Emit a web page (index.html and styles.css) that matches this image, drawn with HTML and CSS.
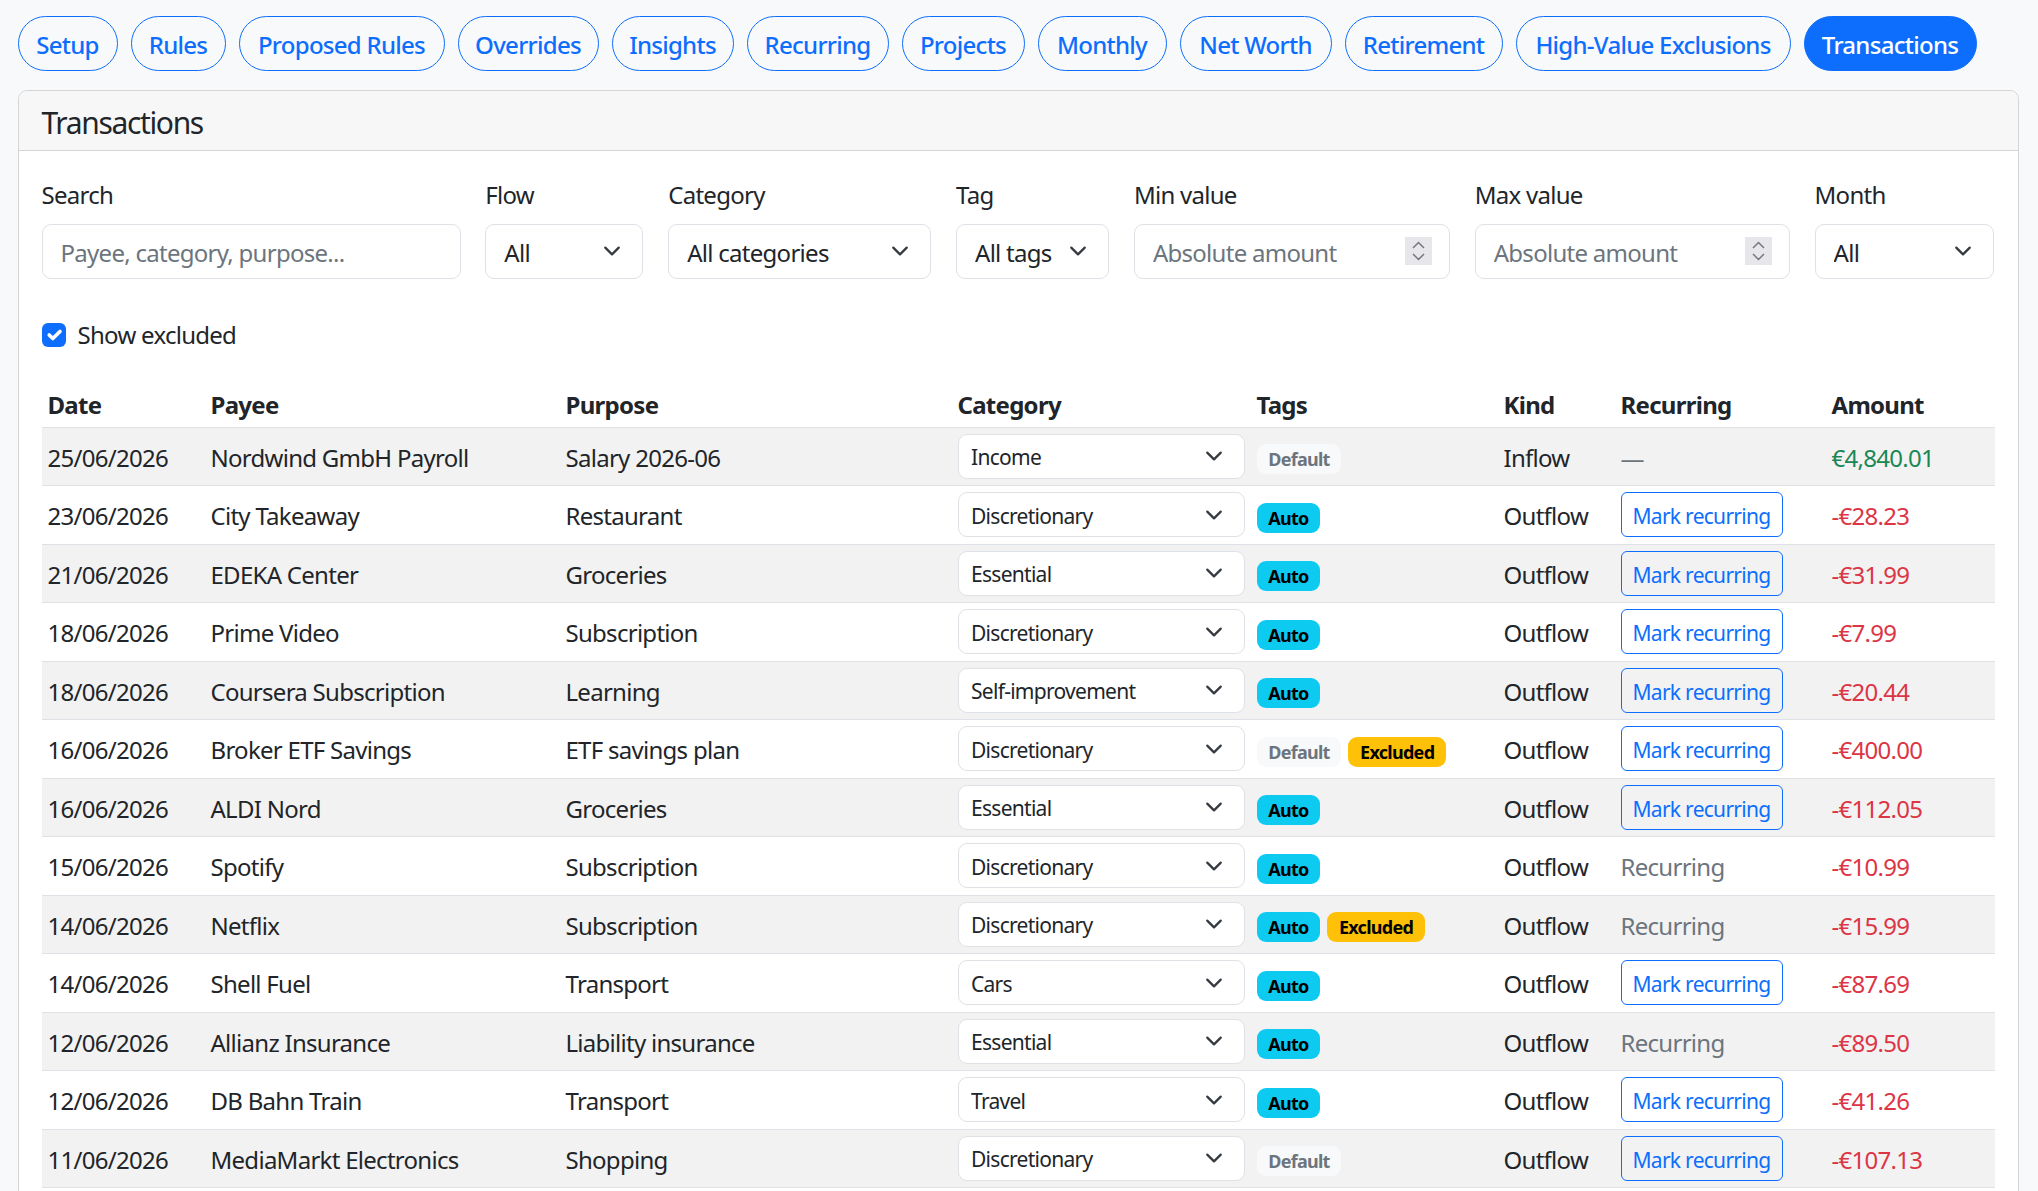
FILE: index.html
```html
<!DOCTYPE html>
<html lang="en">
<head>
    <meta charset="UTF-8">
    <title>Transactions</title>
    <link rel="stylesheet" href="styles.css">
</head>
<body>
    <nav class="tabs">
        <a class="tab">Setup</a>
        <a class="tab">Rules</a>
        <a class="tab">Proposed Rules</a>
        <a class="tab">Overrides</a>
        <a class="tab">Insights</a>
        <a class="tab">Recurring</a>
        <a class="tab">Projects</a>
        <a class="tab">Monthly</a>
        <a class="tab">Net Worth</a>
        <a class="tab">Retirement</a>
        <a class="tab">High-Value Exclusions</a>
        <a class="tab active">Transactions</a>
    </nav>

    <section class="card">
        <div class="card-header">Transactions</div>
        <div class="card-body">
            <!-- Filters -->
            <div class="filters">
                <div class="field">
                    <label>Search</label>
                    <input class="control" type="text" placeholder="Payee, category, purpose...">
                </div>
                <div class="field">
                    <label>Flow</label>
                    <select class="control"><option>All</option></select>
                </div>
                <div class="field">
                    <label>Category</label>
                    <select class="control"><option>All categories</option></select>
                </div>
                <div class="field">
                    <label>Tag</label>
                    <select class="control"><option>All tags</option></select>
                </div>
                <div class="field">
                    <label>Min value</label>
                    <div class="control number">
                        <input type="text" placeholder="Absolute amount">
                        <span class="spin"><svg viewBox="0 0 27 28" width="27" height="28"><path d="M8 11 13.5 5.5 19 11M8 17l5.5 5.5L19 17"/></svg></span>
                    </div>
                </div>
                <div class="field">
                    <label>Max value</label>
                    <div class="control number">
                        <input type="text" placeholder="Absolute amount">
                        <span class="spin"><svg viewBox="0 0 27 28" width="27" height="28"><path d="M8 11 13.5 5.5 19 11M8 17l5.5 5.5L19 17"/></svg></span>
                    </div>
                </div>
                <div class="field">
                    <label>Month</label>
                    <select class="control"><option>All</option></select>
                </div>
            </div>

            <label class="check">
                <span class="box"><svg viewBox="0 0 20 20" width="24" height="24"><path d="m6 10 3 3 6-6"/></svg></span>
                Show excluded
            </label>

            <!-- Transactions table -->
            <table>
                <thead>
                    <tr>
                        <th class="col-date">Date</th>
                        <th class="col-payee">Payee</th>
                        <th class="col-purpose">Purpose</th>
                        <th class="col-category">Category</th>
                        <th class="col-tags">Tags</th>
                        <th class="col-kind">Kind</th>
                        <th class="col-recurring">Recurring</th>
                        <th>Amount</th>
                    </tr>
                </thead>
                <tbody>
                    <tr>
                        <td>25/06/2026</td><td>Nordwind GmbH Payroll</td><td>Salary 2026-06</td>
                        <td><select class="control small"><option>Income</option></select></td>
                        <td><div class="tags"><span class="badge default">Default</span></div></td>
                        <td>Inflow</td><td class="muted">—</td><td class="inflow">€4,840.01</td>
                    </tr>
                    <tr>
                        <td>23/06/2026</td><td>City Takeaway</td><td>Restaurant</td>
                        <td><select class="control small"><option>Discretionary</option></select></td>
                        <td><div class="tags"><span class="badge auto">Auto</span></div></td>
                        <td>Outflow</td><td><button class="mark">Mark recurring</button></td><td class="outflow">-€28.23</td>
                    </tr>
                    <tr>
                        <td>21/06/2026</td><td>EDEKA Center</td><td>Groceries</td>
                        <td><select class="control small"><option>Essential</option></select></td>
                        <td><div class="tags"><span class="badge auto">Auto</span></div></td>
                        <td>Outflow</td><td><button class="mark">Mark recurring</button></td><td class="outflow">-€31.99</td>
                    </tr>
                    <tr>
                        <td>18/06/2026</td><td>Prime Video</td><td>Subscription</td>
                        <td><select class="control small"><option>Discretionary</option></select></td>
                        <td><div class="tags"><span class="badge auto">Auto</span></div></td>
                        <td>Outflow</td><td><button class="mark">Mark recurring</button></td><td class="outflow">-€7.99</td>
                    </tr>
                    <tr>
                        <td>18/06/2026</td><td>Coursera Subscription</td><td>Learning</td>
                        <td><select class="control small"><option>Self-improvement</option></select></td>
                        <td><div class="tags"><span class="badge auto">Auto</span></div></td>
                        <td>Outflow</td><td><button class="mark">Mark recurring</button></td><td class="outflow">-€20.44</td>
                    </tr>
                    <tr>
                        <td>16/06/2026</td><td>Broker ETF Savings</td><td>ETF savings plan</td>
                        <td><select class="control small"><option>Discretionary</option></select></td>
                        <td><div class="tags"><span class="badge default">Default</span><span class="badge excluded">Excluded</span></div></td>
                        <td>Outflow</td><td><button class="mark">Mark recurring</button></td><td class="outflow">-€400.00</td>
                    </tr>
                    <tr>
                        <td>16/06/2026</td><td>ALDI Nord</td><td>Groceries</td>
                        <td><select class="control small"><option>Essential</option></select></td>
                        <td><div class="tags"><span class="badge auto">Auto</span></div></td>
                        <td>Outflow</td><td><button class="mark">Mark recurring</button></td><td class="outflow">-€112.05</td>
                    </tr>
                    <tr>
                        <td>15/06/2026</td><td>Spotify</td><td>Subscription</td>
                        <td><select class="control small"><option>Discretionary</option></select></td>
                        <td><div class="tags"><span class="badge auto">Auto</span></div></td>
                        <td>Outflow</td><td class="muted">Recurring</td><td class="outflow">-€10.99</td>
                    </tr>
                    <tr>
                        <td>14/06/2026</td><td>Netflix</td><td>Subscription</td>
                        <td><select class="control small"><option>Discretionary</option></select></td>
                        <td><div class="tags"><span class="badge auto">Auto</span><span class="badge excluded">Excluded</span></div></td>
                        <td>Outflow</td><td class="muted">Recurring</td><td class="outflow">-€15.99</td>
                    </tr>
                    <tr>
                        <td>14/06/2026</td><td>Shell Fuel</td><td>Transport</td>
                        <td><select class="control small"><option>Cars</option></select></td>
                        <td><div class="tags"><span class="badge auto">Auto</span></div></td>
                        <td>Outflow</td><td><button class="mark">Mark recurring</button></td><td class="outflow">-€87.69</td>
                    </tr>
                    <tr>
                        <td>12/06/2026</td><td>Allianz Insurance</td><td>Liability insurance</td>
                        <td><select class="control small"><option>Essential</option></select></td>
                        <td><div class="tags"><span class="badge auto">Auto</span></div></td>
                        <td>Outflow</td><td class="muted">Recurring</td><td class="outflow">-€89.50</td>
                    </tr>
                    <tr>
                        <td>12/06/2026</td><td>DB Bahn Train</td><td>Transport</td>
                        <td><select class="control small"><option>Travel</option></select></td>
                        <td><div class="tags"><span class="badge auto">Auto</span></div></td>
                        <td>Outflow</td><td><button class="mark">Mark recurring</button></td><td class="outflow">-€41.26</td>
                    </tr>
                    <tr>
                        <td>11/06/2026</td><td>MediaMarkt Electronics</td><td>Shopping</td>
                        <td><select class="control small"><option>Discretionary</option></select></td>
                        <td><div class="tags"><span class="badge default">Default</span></div></td>
                        <td>Outflow</td><td><button class="mark">Mark recurring</button></td><td class="outflow">-€107.13</td>
                    </tr>
                </tbody>
            </table>
        </div>
    </section>
</body>
</html>
```

FILE: styles.css
```css
html {
    height: 100%;
    overflow: hidden;
}
body {
    font-family: "Noto Sans", Roboto, sans-serif;
    font-size: 24px;
    line-height: 36px;
    letter-spacing: -0.03em;
    color: #212529;
    margin: 0;
    padding: 16px 19.5px 0 17.5px;
    background-color: #f8f9fa;
}
.tabs {
    display: grid;
    grid-template-columns: 100px 95px 206px 141px 122px 142px 123px 129px 152px 158px 275px 173px;
    column-gap: 13px;
    margin-bottom: 19px;
}
.tab {
    height: 55px;
    box-sizing: border-box;
    padding-top: 9.5px;
    border: 1.5px solid #0d6efd;
    border-radius: 28px;
    color: #0d6efd;
    font-weight: 500;
    text-align: center;
    white-space: nowrap;
}
.tab.active {
    background-color: #0d6efd;
    color: #fff;
}
.card {
    background-color: #fff;
    border: 1.5px solid #d4d5d6;
    border-radius: 9px;
    padding-bottom: 200px;
}
.card-header {
    height: 60px;
    box-sizing: border-box;
    padding: 9px 23px;
    font-size: 30px;
    line-height: 45px;
    letter-spacing: -0.045em;
    background-color: #f7f7f7;
    border-bottom: 1.5px solid #d4d5d6;
    border-radius: 9px 9px 0 0;
}
.card-body {
    padding: 25.5px 22.5px 0 23px;
}
.filters {
    display: grid;
    grid-template-columns: 419px 158px 263px 153px 316px 315px 179px;
    column-gap: 24.85px;
}
.field label {
    display: block;
    margin-bottom: 11px;
}
.control {
    width: 100%;
    height: 55px;
    box-sizing: border-box;
    padding: 2px 18px 0;
    border: 1.5px solid #dee2e6;
    border-radius: 9px;
    background-color: #fff;
    color: #212529;
    font: inherit;
    letter-spacing: inherit;
}
select.control {
    appearance: none;
    padding-top: 3px;
    background-image: url("data:image/svg+xml,%3csvg xmlns='http://www.w3.org/2000/svg' viewBox='0 0 16 16'%3e%3cpath fill='none' stroke='%23343a40' stroke-linecap='round' stroke-linejoin='round' stroke-width='2' d='m2 5 6 6 6-6'/%3e%3c/svg%3e");
    background-repeat: no-repeat;
    background-position: right 18px center;
    background-size: 24px 18px;
}
input::placeholder {
    color: #6c757d;
    opacity: 1;
}
.number {
    display: flex;
    align-items: center;
    padding: 0 17px 0 18px;
}
.number input {
    flex: 1;
    min-width: 0;
    border: none;
    outline: none;
    padding: 3px 0 0;
    font: inherit;
    letter-spacing: inherit;
}
.spin {
    width: 27px;
    height: 28px;
    background-color: #e6e6eb;
}
.spin svg {
    display: block;
}
.spin path {
    fill: none;
    stroke: #77777f;
    stroke-width: 1.5;
}
.check {
    display: flex;
    align-items: center;
    gap: 12px;
    margin-top: 38.5px;
    margin-bottom: 29.5px;
}
.box {
    width: 24px;
    height: 24px;
    border-radius: 6px;
    background-color: #0d6efd;
}
.box svg {
    display: block;
}
.box path {
    fill: none;
    stroke: #fff;
    stroke-width: 3;
    stroke-linecap: round;
    stroke-linejoin: round;
}
table {
    width: 100%;
    table-layout: fixed;
    border-collapse: collapse;
}
th {
    height: 44.5px;
    box-sizing: border-box;
    padding: 0 6px;
    text-align: left;
    font-weight: 700;
    border-bottom: 1.5px solid #dee2e6;
}
td {
    height: 58.5px;
    box-sizing: border-box;
    padding: 3px 6px 0;
    border-bottom: 1.5px solid #dee2e6;
    white-space: nowrap;
}
tbody tr:nth-child(odd) {
    background-color: #f2f2f2;
}
.col-date { width: 163px; }
.col-payee { width: 355px; }
.col-purpose { width: 392px; }
.col-category { width: 299px; }
.col-tags { width: 247px; }
.col-kind { width: 117px; }
.col-recurring { width: 211px; }
select.control.small {
    display: block;
    height: 45px;
    margin-top: -3px;
    padding: 3px 12.5px 0;
    font-size: 21px;
    line-height: 31.5px;
}
.tags {
    display: flex;
    gap: 7px;
    margin-top: 3px;
}
.badge {
    height: 30px;
    padding: 0 11.7px;
    border-radius: 9px;
    font-size: 18px;
    line-height: 30px;
    font-weight: 700;
    color: #000;
}
.badge.default {
    background-color: #f8f9fa;
    color: #6c757d;
}
.badge.auto {
    background-color: #0dcaf0;
}
.badge.excluded {
    background-color: #ffc107;
}
.muted {
    color: #6c757d;
}
.inflow {
    color: #198754;
}
.outflow {
    color: #dc3545;
}
.mark {
    display: block;
    width: 162px;
    height: 45px;
    margin-top: -3px;
    padding: 3px 0 0;
    border: 1.5px solid #0d6efd;
    border-radius: 6px;
    background: transparent;
    color: #0d6efd;
    font: inherit;
    font-size: 21px;
    letter-spacing: inherit;
}
```
